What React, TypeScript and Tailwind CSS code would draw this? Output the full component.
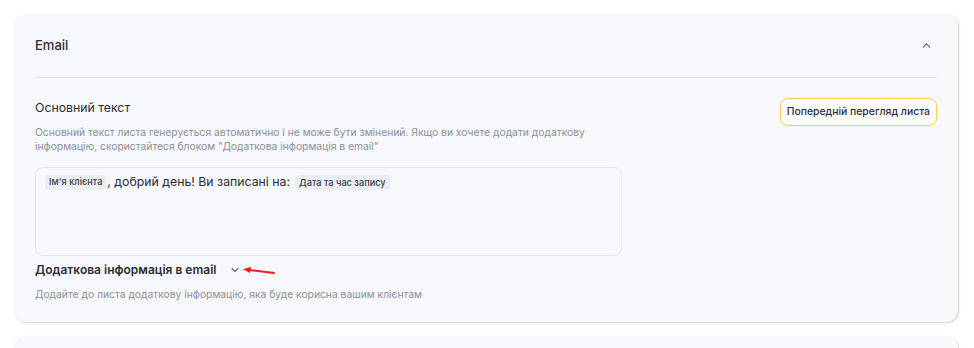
import React from 'react';
import { ChevronUp, ChevronDown } from 'lucide-react';

function Chip({ label }: { label: string }) {
  return (
    <span className="inline-flex h-[15px] items-center rounded-[4px] bg-[#eaedf3] px-[4px] text-[9.2px] font-medium text-[#3a3d44]">
      {label}
    </span>
  );
}

export default function App() {
  return (
    <div className="bg-white pb-[14px] pl-[14px] pr-[16px] pt-[14px] font-['Inter',sans-serif] text-[#2a2c31]">
      <section className="rounded-[12px] bg-[#f7f8fc] px-[21px] pb-[21px] shadow-[1px_1px_2px_rgba(0,0,0,0.18)]">
        <header className="flex h-[64px] items-center justify-between border-b border-[#e6e8ee]">
          <h2 className="text-[13px] font-medium">Email</h2>
          <ChevronUp className="mr-[4px] h-[13px] w-[13px] text-[#5f636b]" strokeWidth={2.2} />
        </header>

        <div className="flex items-start justify-between pt-[20px]">
          <div>
            <h3 className="text-[12.3px] leading-[20px]">Основний текст</h3>
            <p className="mt-[7px] max-w-[600px] text-[10.3px] leading-[14px] text-[#8b8f98]">
              Основний текст листа генерується автоматично і не може бути змінений. Якщо ви хочете додати додаткову
              <br />
              інформацію, скористайтеся блоком "Додаткова інформація в email"
            </p>
          </div>
          <button className="h-[28px] rounded-[8px] border border-[#f3d14a] bg-white px-[6px] text-[10.4px] font-medium text-[#2a2c31]">
            Попередній перегляд листа
          </button>
        </div>

        <div className="mt-[14px] h-[89px] w-[587px] rounded-[8px] border border-[#e4e6ec] bg-[#f7f8fc] px-[9px] pt-[5px]">
          <div className="flex items-center gap-[1px] text-[12.3px]">
            <Chip label="Ім'я клієнта" />
            <span>, добрий день! Ви записані на:</span>
            <span className="ml-[4px]">
              <Chip label="Дата та час запису" />
            </span>
          </div>
        </div>

        <div className="mt-[4px] flex items-center">
          <h3 className="text-[12px] font-semibold leading-[20px]">Додаткова інформація в email</h3>
          <ChevronDown className="ml-[13px] h-[12px] w-[12px] text-[#5f636b]" strokeWidth={2.2} />
          <svg width="34" height="10" viewBox="0 0 34 10" className="ml-[1px] mt-[2px]">
            <path d="M32 7 L7 4" stroke="#e8201e" strokeWidth="2" strokeLinecap="round" />
            <path d="M1 3.2 L9 0.8 L8 7 Z" fill="#e8201e" />
          </svg>
        </div>
        <p className="mt-[7px] text-[10.3px] leading-[14px] text-[#8b8f98]">
          Додайте до листа додаткову інформацію, яка буде корисна вашим клієнтам
        </p>
      </section>

      <section className="mt-[14px] h-[40px] rounded-[12px] bg-[#f7f8fc] shadow-[1px_1px_2px_rgba(0,0,0,0.18)]" />
    </div>
  );
}
